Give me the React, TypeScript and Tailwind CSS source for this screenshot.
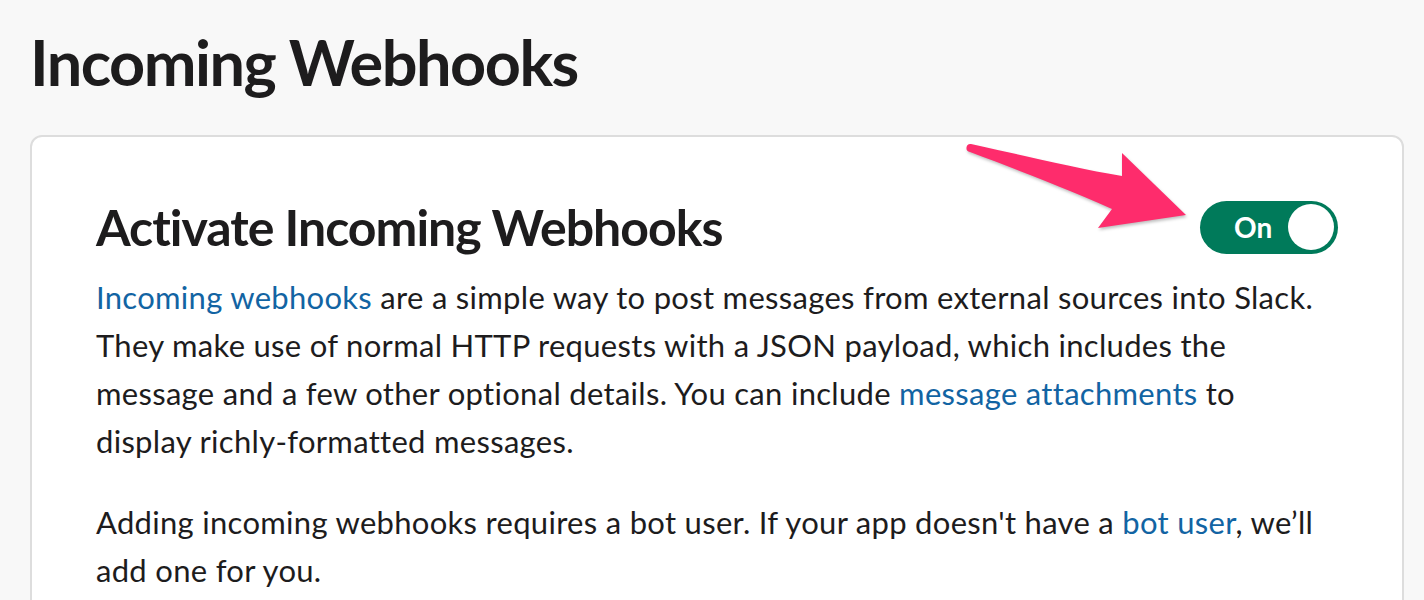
import React from "react";

const Link = ({ children }: { children: React.ReactNode }) => (
  <a href="#" className="text-[#1264a3] no-underline">
    {children}
  </a>
);

const Toggle = () => (
  <button className="flex items-center justify-between w-[138px] h-[53px] rounded-full bg-[#007a5a] pl-[34px] pr-[4px] shrink-0">
    <span className="text-white font-bold text-[28px] leading-none">On</span>
    <span className="w-[46px] h-[46px] rounded-full bg-white" />
  </button>
);

const Arrow = () => (
  <svg
    className="absolute left-0 top-0 pointer-events-none"
    width="1424"
    height="600"
    viewBox="0 0 1424 600"
    style={{ filter: "drop-shadow(1px 2px 1.5px rgba(0,0,0,0.25))" }}
  >
    <path
      d="M971 144 C1030 157 1080 169 1122 176 L1122 153 L1186 215 L1098 228 L1112 209 C1060 186 1010 167 970 152 A4 4 0 0 1 971 144 Z"
      fill="#fe2c6c"
    />
  </svg>
);

export default function App() {
  return (
    <div className="relative h-[600px] bg-[#f8f8f8] pl-[30px] pr-[20px] pt-[23px] overflow-hidden" style={{ fontFamily: "Lato, 'Noto Sans', sans-serif" }}>
      <h1 className="text-[63px] leading-[77px] font-bold text-[#1d1c1d] tracking-[-1.5px]">Incoming Webhooks</h1>
      <div className="mt-[35px] bg-white border-2 border-[#dddddd] rounded-[12px] px-16 pt-[59px] pb-10 text-[#1d1c1d]">
        <div className="flex items-center justify-between">
          <h2 className="text-[50px] leading-[62px] font-bold tracking-[-1px]">Activate Incoming Webhooks</h2>
          <Toggle />
        </div>
        <p className="mt-[15px] text-[31px] leading-[48px] tracking-[0.3px]">
          <Link>Incoming webhooks</Link> are a simple way to post messages from external sources into Slack.
          <br />
          They make use of normal HTTP requests with a JSON payload, which includes the
          <br />
          message and a few other optional details. You can include <Link>message attachments</Link> to
          <br />
          display richly-formatted messages.
        </p>
        <p className="mt-[33px] text-[31px] leading-[48px] tracking-[0.3px]">
          Adding incoming webhooks requires a bot user. If your app doesn't have a <Link>bot user</Link>, we’ll
          <br />
          add one for you.
        </p>
      </div>
      <Arrow />
    </div>
  );
}
